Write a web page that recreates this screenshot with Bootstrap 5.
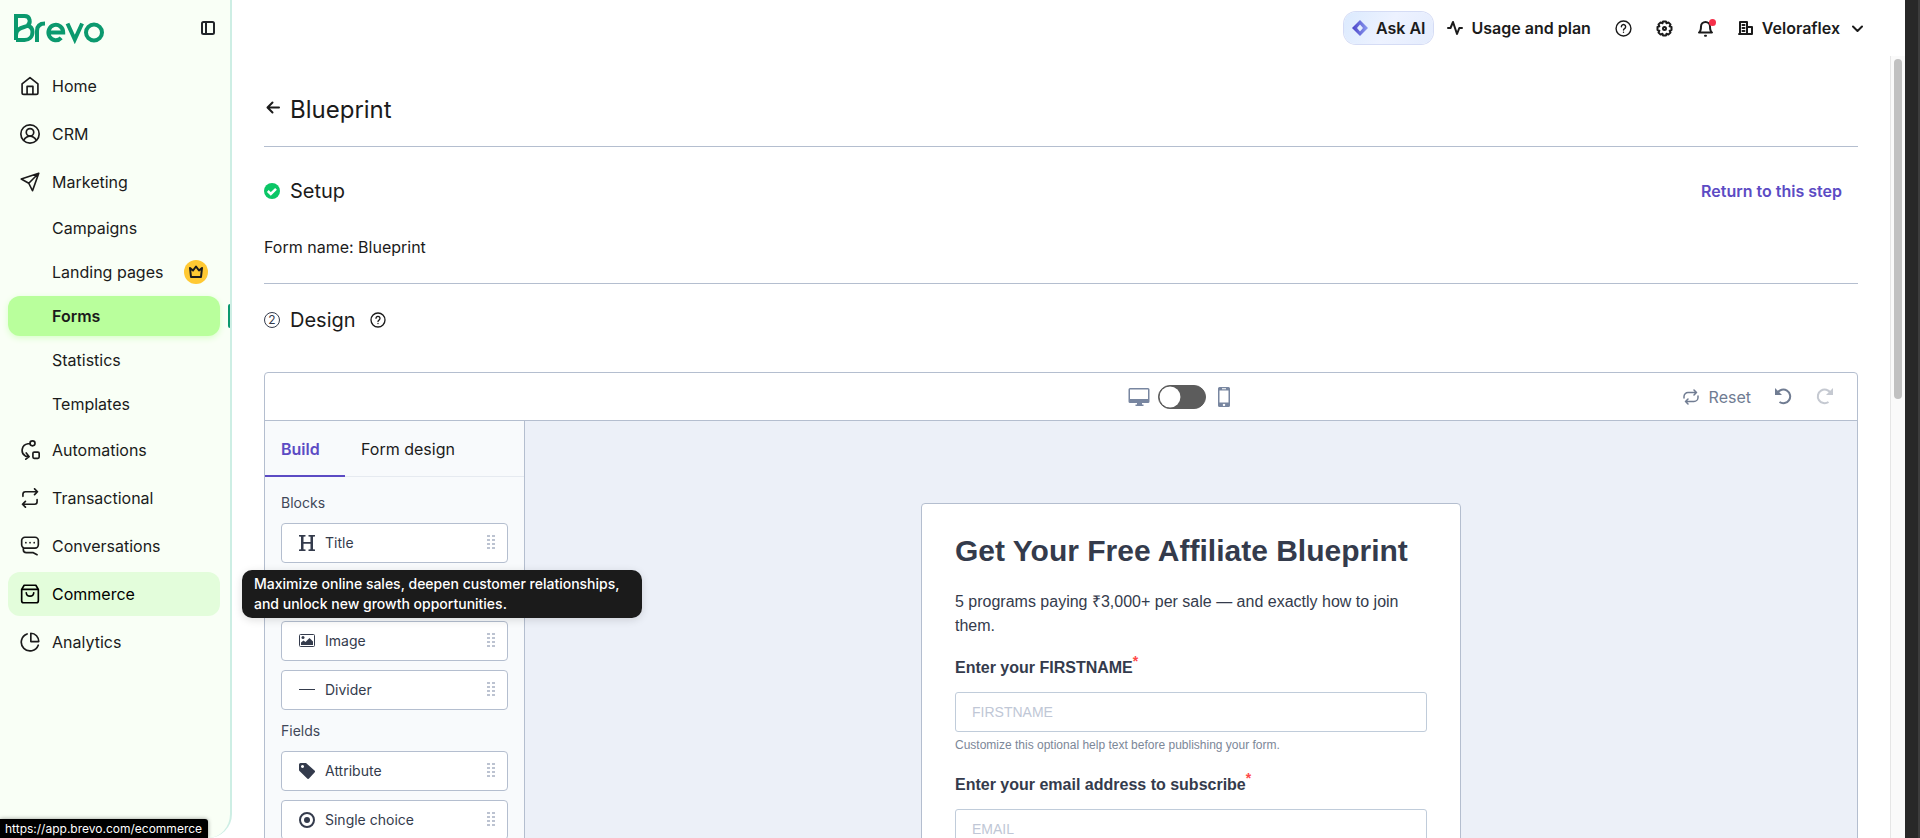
<!DOCTYPE html>
<html lang="en">
<head>
<meta charset="utf-8">
<meta name="viewport" content="width=device-width, initial-scale=1">
<title>Brevo – Forms</title>
<link rel="stylesheet" href="https://cdn.jsdelivr.net/npm/bootstrap@5.3.0/dist/css/bootstrap.min.css">
<style>
:root{--ink:#1b1b1b;--slate:#343b4c;--rule:#b4becf;--violet:#5c4bc4;--green:#0b996e}
body{font-family:Inter,"Liberation Sans",sans-serif;font-size:16px;line-height:24px;color:var(--ink);background:#fff}
svg{display:block;flex:none}
.ln{fill:none;stroke:currentColor;stroke-width:2;stroke-linecap:round;stroke-linejoin:round}
.app-side{width:232px;background:#f9fff6;border-right:2px solid #cdeee4;border-bottom-right-radius:24px}
.side-top{height:64px;padding:8px 13px 16px 12px}
.side-nav{padding:0 10px 0 8px}
.side-nav .nav-link{position:relative;height:44px;padding:0 12px;gap:12px;border-radius:12px;color:var(--ink);width:212px}
.side-nav .sub-link{height:40px;padding-left:44px}
.side-nav .hovered{background:#e3fddb;color:#000}
.side-nav .current{background:#b9ff9c;font-weight:600;box-shadow:0 2px 6px #d8ffc8}
.side-nav .current::after{content:"";position:absolute;right:-10px;top:8px;width:2px;height:24px;background:var(--green);border-radius:2px 0 0 2px}
.crown{width:24px;height:24px;background:#ffc933}
.topbar{height:56px;padding-right:19px}
.topbar .btn{--bs-btn-padding-x:8px;--bs-btn-padding-y:4px;--bs-btn-line-height:24px;--bs-btn-font-size:16px;font-weight:600;color:var(--ink);border:0}
.topbar .icon-btn{--bs-btn-padding-x:12px}
.topbar .ask-ai{background:linear-gradient(120deg,#dbeafe,#edf2ff 50%,#e4ecfd);border-radius:12px;box-shadow:0 0 0 1px #d5dcf5;margin-right:6px}
.alert-dot{width:7px;height:7px;background:#f5304a;top:-1px;right:-2px}
.scroll-area{padding:0 32px}
.title-row{padding:38px 0 20px;gap:8px}
.page-h{font-size:24px;line-height:32px;font-weight:400}
.step{padding:30px 0 24px}
.step-last{padding:22px 0 0}
.step-row{gap:10px}
.step-h{font-size:20px;line-height:28px;font-weight:400}
.step-note{margin:30px 0 0}
.rule-b{border-bottom:1px solid var(--rule)}
.back-link{color:var(--ink)}
.step-link{color:var(--violet);font-weight:600}
.step-mark{width:16px;height:16px}
.editor{margin-top:38px;border:1px solid var(--rule);border-radius:4px 4px 0 0}
.tools{height:48px;color:#7886a0;padding-left:260px}
.tools .side-cell{flex:1 1 0}
.tools .end-cell{padding-right:24px;gap:24px}
.tools .view-switch{gap:8px}
.tools .form-check-input{--bs-form-switch-bg:url("data:image/svg+xml,%3csvg xmlns='http://www.w3.org/2000/svg' viewBox='-4 -4 8 8'%3e%3ccircle r='3.800' fill='%23fff'/%3e%3c/svg%3e");width:48px;height:24px;margin:0;float:none;background-color:#5c5c5c;border:1px solid #5c5c5c}
.tools .btn{--bs-btn-padding-x:0;--bs-btn-padding-y:0;--bs-btn-line-height:24px;--bs-btn-color:#707c92;--bs-btn-disabled-color:#8c94a4;--bs-btn-disabled-opacity:.5;border:0}
.tools .reset-btn{gap:10px}
.palette{width:260px;background:#f8fafc;border-right:1px solid var(--rule)}
.palette .nav-tabs{--bs-nav-tabs-border-width:0;border-bottom:1px solid #e6eaf0;height:56px;flex-wrap:nowrap}
.palette .nav-link{padding:0 0 0 16px;height:56px;text-align:left;color:var(--ink);border:0;white-space:nowrap;border-radius:0}
.palette .nav-link.active{width:80px;background:none;color:var(--violet);font-weight:600;box-shadow:inset 0 -2px var(--violet)}
.group-h{font-size:14px;line-height:20px;font-weight:400;color:#414859;margin:0 0 10px}
.blocks{display:grid;gap:9px;margin-bottom:11px}
.block{height:40px;padding:0 12px 0 17px;gap:10px;font-size:14px;line-height:20px;color:var(--slate);background:#fff;border:1px solid var(--rule);border-radius:4px;text-align:left}
.stage{background:#ecf0f8;padding-top:82px}
.form-card{width:540px;padding:23px 33px;border:1px solid var(--rule);border-radius:4px 4px 0 0;background:#fff;font-family:"Liberation Sans",Arial,sans-serif;color:var(--slate)}
.form-h{font-size:30px;line-height:48px;font-weight:700;margin-bottom:15px}
.form-card .lead-text{margin-bottom:18px}
.form-card .form-label{font-weight:700;margin-bottom:12px;display:block}
.form-card .form-control{height:40px;padding:0 16px;font-size:14px;border-color:#c0ccda;border-radius:3px}
.form-card .form-control::placeholder{color:#c0c7d6}
.form-card .form-text{font-size:12px;line-height:16px;color:#7c8798;margin:5px 0 20px}
.req{color:#ff4949;font-size:14px}
.scroll-col{width:15px;background:#fafafa;border-left:1px solid #e6e6e6;margin-top:56px;padding:3px 3px 0}
.scroll-thumb{height:340px;background:#c1c1c1;border-radius:4px}
.edge{width:15px;background:#282828;border-right:2px solid #3c3c3c}
.tip{left:242px;top:570px;width:400px;padding:4px 12px;background:#1b1b1b;color:#fff;border-radius:10px;font-size:14px;line-height:20px;font-weight:500;box-shadow:0 2px 8px #0002}
.url-hint{left:0;bottom:0;height:19px;padding:0 6px 0 5px;background:#000;color:#fff;font-size:12px;line-height:20px;border-top-right-radius:3px;box-shadow:0 0 4px #0006}
</style>
</head>
<body class="vh-100 overflow-hidden d-flex position-relative">
<svg class="d-none">
  <symbol id="grip" viewBox="0 0 8 16"><path fill="#bcc3d1" d="M0 0h3v2H0zM5 0h3v2H5zM0 4h3v2H0zM5 4h3v2H5zM0 8h3v2H0zM5 8h3v2H5zM0 12h3v2H0zM5 12h3v2H5z"/></symbol>
  <symbol id="help" viewBox="0 0 24 24"><circle cx="12" cy="12" r="10.500"/><path d="M9 9.500a3 3 0 1 1 4.500 2.600c-1 .600-1.500 1-1.500 2M12 17.300v.100"/></symbol>
</svg>

<aside class="app-side d-flex flex-column flex-shrink-0">
  <div class="side-top d-flex align-items-center justify-content-between">
    <a href="#" aria-label="Brevo"><svg width="94" height="34" viewBox="0 0 94 34" fill="none" stroke="#0b996e" stroke-width="4"><path d="M4 29V5h8.500c6 0 6.500 7 3 9.700-3 2-11.500 1.500-11.500 9.500M15.500 14.500c3.500 1 5 3.500 5 6.500 0 5-3.500 8-8 8H4"/><path d="M25 31V20c0-5.500 3-7.500 8-7.500M36.500 21.500h14.700a7.400 7.700 0 1 0-2 5.300M55.500 12.500l7.300 16 7.300-16"/><circle cx="82" cy="21.500" r="8"/></svg></a>
    <button class="btn p-0 border-0" aria-label="Collapse menu"><svg class="ln" width="18" height="18" viewBox="0 0 18 18"><rect x="3" y="3" width="12" height="12" rx="1.500"/><path d="M7 3v12"/></svg></button>
  </div>
  <nav class="side-nav nav flex-column gap-1">
    <a class="nav-link d-flex align-items-center" href="#"><svg class="ln" width="20" height="20" viewBox="0 0 24 24"><path d="M2.500 9.500L12 2l9.500 7.500v10.500a2 2 0 0 1-2 2h-15a2 2 0 0 1-2-2zM8.500 22V12.500h7V22"/></svg>Home</a>
    <a class="nav-link d-flex align-items-center" href="#"><svg class="ln" width="20" height="20" viewBox="0 0 24 24"><circle cx="12" cy="12" r="11"/><circle cx="12" cy="10" r="4.500"/><path d="M4.500 19.500c2-3.500 4.500-5 7.500-5s5.500 1.500 7.500 5"/></svg>CRM</a>
    <a class="nav-link d-flex align-items-center" href="#"><svg class="ln" width="20" height="20" viewBox="0 0 24 24"><path d="M22.500 1.500L1.500 8.500l9 5 4.500 9zM22.500 1.500l-12 12"/></svg>Marketing</a>
    <a class="nav-link sub-link d-flex align-items-center" href="#">Campaigns</a>
    <a class="nav-link sub-link d-flex align-items-center justify-content-between" href="#">Landing pages <span class="crown rounded-circle d-flex align-items-center justify-content-center"><svg class="ln" width="14" height="14" viewBox="0 0 14 14"><path d="M1 3l3 2.500L7 1.500l3 4L13 3l-1 9H2z"/></svg></span></a>
    <a class="nav-link sub-link current d-flex align-items-center" href="#" aria-current="page">Forms</a>
    <a class="nav-link sub-link d-flex align-items-center" href="#">Statistics</a>
    <a class="nav-link sub-link d-flex align-items-center" href="#">Templates</a>
    <a class="nav-link d-flex align-items-center" href="#"><svg class="ln" width="20" height="20" viewBox="0 0 24 24"><circle cx="15" cy="4" r="3"/><rect x="15.500" y="14.500" width="7.500" height="7.500" rx="1.500"/><path d="M12 4.500H9.500a8 8 0 0 0-3 14.800l4 .700M7.500 15.500l3.500 4.500-4 3"/></svg>Automations</a>
    <a class="nav-link d-flex align-items-center" href="#"><svg class="ln" width="20" height="20" viewBox="0 0 24 24"><path d="M3.500 10V7.500a3 3 0 0 1 3-3H21M17.500 1L21 4.500 17.500 8M20.500 14v2.500a3 3 0 0 1-3 3H3M6.500 16L3 19.500 6.500 23"/></svg>Transactional</a>
    <a class="nav-link d-flex align-items-center" href="#"><svg class="ln" width="20" height="20" viewBox="0 0 24 24"><path d="M6 1.500h12a4 4 0 0 1 4 4v5a4 4 0 0 1-4 4H6a4 4 0 0 1-4-4v-5a4 4 0 0 1 4-4zM4 14v2.500a3.500 3.500 0 0 0 3.500 3.500H16l4.500 2.500M7 8h.100M12 8h.100M17 8h.100"/></svg>Conversations</a>
    <a class="nav-link hovered d-flex align-items-center" href="#"><svg class="ln" width="20" height="20" viewBox="0 0 24 24"><path d="M2 6.500L5 1.500h14l3 5V20a2.500 2.500 0 0 1-2.500 2.500h-15A2.500 2.500 0 0 1 2 20zM2 6.500h20M7.500 10.500c.500 5.500 8.500 5.500 9 0"/></svg>Commerce</a>
    <a class="nav-link d-flex align-items-center" href="#"><svg class="ln" width="20" height="20" viewBox="0 0 24 24"><path d="M8.500 2.300a10.500 10.500 0 1 0 13.400 13.500M13 1.500v10h9.500c0-5.500-4-10-9.500-10z"/></svg>Analytics</a>
  </nav>
</aside>

<div class="flex-grow-1 d-flex flex-column overflow-hidden">
  <header class="topbar d-flex flex-shrink-0 align-items-center justify-content-end">
    <button class="btn ask-ai d-flex align-items-center gap-2"><svg width="16" height="18" viewBox="0 0 16 18"><defs><linearGradient id="ai" x1="0" x2="1"><stop stop-color="#4a42c8"/><stop offset="1" stop-color="#8c9cf0"/></linearGradient></defs><path fill="url(#ai)" fill-rule="evenodd" d="M8 1l8 8-8 8-8-8zM8 5.500L5 9l3 3.500L11 9z"/></svg>Ask AI</button>
    <button class="btn d-flex align-items-center gap-2"><svg class="ln" width="16" height="16" viewBox="0 0 16 16"><path d="M1 8h2.500L6 2l4 12 2.300-6H15"/></svg>Usage and plan</button>
    <button class="btn icon-btn ms-1" aria-label="Help"><svg class="ln" width="17" height="17"><use href="#help"/></svg></button>
    <button class="btn icon-btn" aria-label="Settings"><svg class="ln" width="17" height="17" viewBox="0 0 17 17"><path d="M7 1.500h3l.500 1.800 1.900-.900 2.100 2.100-.900 1.900 1.900.600v3l-1.900.600.900 1.900-2.100 2.100-1.900-.900-.500 1.800H7l-.500-1.800-1.900.900-2.100-2.100.900-1.900L1.500 10V7l1.900-.600-.900-1.900 2.100-2.100 1.900.900z"/><circle cx="8.500" cy="8.500" r="1.500"/></svg></button>
    <button class="btn icon-btn" aria-label="Notifications"><span class="position-relative d-block"><svg class="ln" width="17" height="17" viewBox="0 0 17 17"><path d="M2 12.500c1.500-1 2-3 2-6a4.500 4.500 0 0 1 9 0c0 3 .500 5 2 6zM8 15.700h1"/></svg><span class="alert-dot position-absolute rounded-circle"></span></span></button>
    <button class="btn d-flex align-items-center gap-2 ms-1"><svg class="ln" width="16" height="16" viewBox="0 0 16 16"><path d="M2 14V2h7v12M9 7h5v7H1M4.500 5h2M4.500 8h2M4.500 11h2"/></svg>Veloraflex<svg class="ln ms-1" width="11" height="11" viewBox="0 0 11 11"><path d="M1 3.500L5.500 8 10 3.500"/></svg></button>
  </header>

  <main class="scroll-area flex-grow-1 overflow-hidden">
    <div class="title-row d-flex align-items-center rule-b">
      <a class="back-link" href="#" aria-label="Back"><svg class="ln" width="18" height="18" viewBox="0 0 18 18"><path d="M15 6.500H4M8.500 1.500l-5 5 5 5"/></svg></a>
      <h1 class="page-h mb-0">Blueprint</h1>
    </div>
    <section class="step rule-b">
      <div class="d-flex align-items-center justify-content-between pe-3">
        <div class="step-row d-flex align-items-center"><svg class="step-mark" viewBox="0 0 16 16"><circle cx="8" cy="8" r="8" fill="#0bc666"/><path d="M3.800 8l3 3 5.200-5.200" fill="none" stroke="#fff" stroke-width="2.500"/></svg><h2 class="step-h mb-0">Setup</h2></div>
        <a class="step-link text-decoration-none" href="#">Return to this step</a>
      </div>
      <p class="step-note">Form name: Blueprint</p>
    </section>
    <section class="step-last">
      <div class="step-row d-flex align-items-center">
        <svg class="step-mark" viewBox="0 0 16 16"><circle cx="8" cy="8" r="7.500" fill="none" stroke="#343b4c"/><text x="8" y="12" font-size="12" text-anchor="middle" fill="#343b4c">2</text></svg>
        <h2 class="step-h mb-0">Design</h2>
        <svg class="ln ms-1" width="16" height="16"><use href="#help"/></svg>
      </div>
      <div class="editor">
        <div class="tools rule-b d-flex align-items-center">
          <div class="side-cell"></div>
          <div class="view-switch d-flex align-items-center">
            <svg width="22" height="18" viewBox="0 0 22 18" fill="currentColor"><path fill-rule="evenodd" d="M2 0h18a1.500 1.500 0 0 1 1.500 1.500v12A1.500 1.500 0 0 1 20 15h-6v1.500h1.500V18h-8v-1.500H9V15H2A1.500 1.500 0 0 1 .500 13.500v-12A1.500 1.500 0 0 1 2 0zM2 1.500v9.500h18V1.500z"/></svg>
            <div class="form-check form-switch d-flex p-0 m-0"><input class="form-check-input" type="checkbox" role="switch" aria-label="Mobile preview"></div>
            <svg class="ms-1" width="12" height="20" viewBox="0 0 12 20" fill="currentColor"><path fill-rule="evenodd" d="M1.500 0h9A1.500 1.500 0 0 1 12 1.500v17a1.500 1.500 0 0 1-1.500 1.500h-9A1.500 1.500 0 0 1 0 18.500v-17A1.500 1.500 0 0 1 1.500 0zM1.500 3.500v12h9v-12zM4 1.200v1h4v-1zM6 16.700a1.200 1.200 0 1 0 .010 0z"/></svg>
          </div>
          <div class="side-cell end-cell d-flex align-items-center justify-content-end">
            <button class="btn reset-btn d-flex align-items-center"><svg width="16" height="16" viewBox="0 0 16 16" fill="none" stroke="currentColor" stroke-width="1.500" stroke-linecap="round" stroke-linejoin="round"><path d="M1 9V7.500a4 4 0 0 1 4-4h8.500M11 1l2.500 2.500L11 6M15 7v1.500a4 4 0 0 1-4 4H2.500M5 10l-2.500 2.500L5 15"/></svg>Reset</button>
            <button class="btn" aria-label="Undo"><svg width="17" height="17" viewBox="0 0 17 17" fill="none" stroke="currentColor" stroke-width="2"><path d="M2.500 5A6.800 6.800 0 1 1 4.500 14"/><path d="M0 0v7h7z" fill="currentColor" stroke="none"/></svg></button>
            <button class="btn" aria-label="Redo" disabled><svg width="17" height="17" viewBox="0 0 17 17" fill="none" stroke="currentColor" stroke-width="2"><path d="M14.500 5a6.800 6.800 0 1 0-2 9"/><path d="M17 0v7h-7z" fill="currentColor" stroke="none"/></svg></button>
          </div>
        </div>
        <div class="d-flex">
          <div class="palette flex-shrink-0">
            <div class="nav nav-tabs" role="tablist">
              <button class="nav-link active" role="tab" aria-selected="true">Build</button>
              <button class="nav-link" role="tab" aria-selected="false">Form design</button>
            </div>
            <div class="p-3">
              <h3 class="group-h">Blocks</h3>
              <div class="blocks">
                <button class="block d-flex align-items-center"><svg width="16" height="16" viewBox="0 0 16 16" fill="currentColor"><path d="M0 0h6.500v1.500l-2 .300V7h7V1.800l-2-.300V0H16v1.500l-2 .300v12.400l2 .300V16H9.500v-1.500l2-.300V8.700h-7v5.500l2 .300V16H0v-1.500l2-.300V1.800l-2-.300z"/></svg><span class="flex-grow-1">Title</span><svg width="8" height="16"><use href="#grip"/></svg></button>
                <button class="block d-flex align-items-center justify-content-between" aria-label="Text"><svg width="16" height="16" viewBox="0 0 16 16" stroke="currentColor" stroke-width="1.500"><path d="M1 3h14M1 8h14M1 13h9"/></svg><svg width="8" height="16"><use href="#grip"/></svg></button>
                <button class="block d-flex align-items-center"><svg width="16" height="16" viewBox="0 0 16 16" fill="currentColor"><rect x=".500" y="1.500" width="15" height="12" rx="1" fill="none" stroke="currentColor"/><circle cx="4" cy="4.500" r="1.500"/><path d="M2 12V9.500l2.500-2 2 1.500L10.500 5 14 8.500V12z"/></svg><span class="flex-grow-1">Image</span><svg width="8" height="16"><use href="#grip"/></svg></button>
                <button class="block d-flex align-items-center"><svg width="16" height="16" viewBox="0 0 16 16" stroke="currentColor"><path d="M0 7.500h16"/></svg><span class="flex-grow-1">Divider</span><svg width="8" height="16"><use href="#grip"/></svg></button>
              </div>
              <h3 class="group-h">Fields</h3>
              <div class="blocks">
                <button class="block d-flex align-items-center"><svg width="16" height="16" viewBox="0 0 16 16" fill="currentColor"><path fill-rule="evenodd" d="M1.500 0H7l8.500 7.500a1.300 1.300 0 0 1 0 2L10 15.600a1.300 1.300 0 0 1-1.800 0L.500 8A1.500 1.500 0 0 1 0 7V1.500A1.500 1.500 0 0 1 1.500 0zM3.500 2a1.500 1.500 0 1 0 .010 0z"/></svg><span class="flex-grow-1">Attribute</span><svg width="8" height="16"><use href="#grip"/></svg></button>
                <button class="block d-flex align-items-center"><svg width="16" height="16" viewBox="0 0 16 16" fill="currentColor"><circle cx="8" cy="8" r="7" fill="none" stroke="currentColor" stroke-width="2"/><circle cx="8" cy="8" r="3"/></svg><span class="flex-grow-1">Single choice</span><svg width="8" height="16"><use href="#grip"/></svg></button>
              </div>
            </div>
          </div>
          <div class="stage flex-grow-1 d-flex justify-content-center">
            <form class="form-card">
              <h2 class="form-h">Get Your Free Affiliate Blueprint</h2>
              <p class="lead-text">5 programs paying ₹3,000+ per sale — and exactly how to join them.</p>
              <label class="form-label" for="fname">Enter your FIRSTNAME<sup class="req">*</sup></label>
              <input class="form-control" id="fname" type="text" placeholder="FIRSTNAME">
              <div class="form-text">Customize this optional help text before publishing your form.</div>
              <label class="form-label" for="email">Enter your email address to subscribe<sup class="req">*</sup></label>
              <input class="form-control" id="email" type="email" placeholder="EMAIL">
            </form>
          </div>
        </div>
      </div>
    </section>
  </main>
</div>
<div class="scroll-col flex-shrink-0"><div class="scroll-thumb"></div></div>
<div class="edge flex-shrink-0"></div>
<div class="tip position-absolute" role="tooltip">Maximize online sales, deepen customer relationships, and unlock new growth opportunities.</div>
<div class="url-hint position-absolute">https://app.brevo.com/ecommerce</div>
<script src="https://cdn.jsdelivr.net/npm/bootstrap@5.3.0/dist/js/bootstrap.bundle.min.js"></script>
</body>
</html>
